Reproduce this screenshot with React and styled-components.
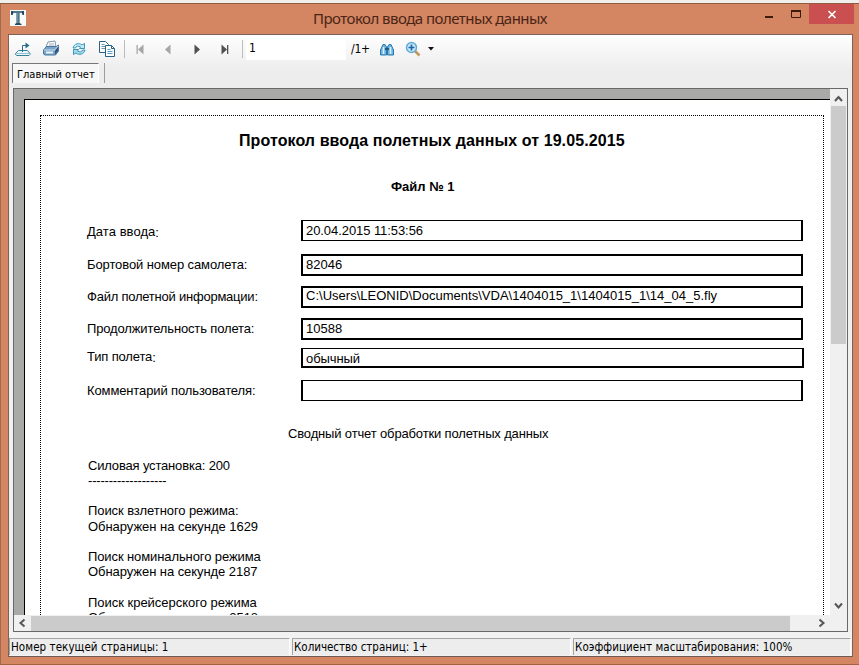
import React from 'react';
import styled, { createGlobalStyle } from 'styled-components';

const GlobalStyle = createGlobalStyle`
  * { box-sizing: border-box; }
  body { margin: 0; background: #f1efec; overflow: hidden; }
`;

const ui = '"DejaVu Sans Condensed", "DejaVu Sans", sans-serif';
const report = '"Liberation Sans", Arial, sans-serif';

const Desktop = styled.div`
  width: 859px;
  height: 665px;
  padding-top: 3px;
  background: #f1efec;
  overflow: hidden;
`;

const Window = styled.div`
  width: 859px;
  height: 662px;
  display: flex;
  flex-direction: column;
  padding: 0 5px 7px 7px;
  background: #d38661;
  border-top: 1px solid #8f5b43;
  border-left: 1px solid #a0694f;
  border-bottom: 1px solid #a8613e;
`;

const TitleBar = styled.header`
  flex: 0 0 30px;
  display: grid;
  grid-template-columns: 190px 1fr 190px;
`;

const AppIcon = styled.svg`
  display: block;
  margin: 6px 0 0 2px;
`;

const WindowTitle = styled.h1`
  margin: 0;
  padding: 3px 2px 0 0;
  text-align: center;
  font: 400 15px/22px "Noto Sans", "Open Sans", sans-serif;
  color: #4a2416;
  white-space: nowrap;
  letter-spacing: -0.53px;
`;

const WindowButtons = styled.div`
  display: flex;
  justify-content: flex-end;
  align-items: flex-start;
`;

const WindowButton = styled.button`
  width: ${(p) => (p.$close ? 45 : 27)}px;
  height: 20px;
  padding: 0;
  border: 0;
  background: ${(p) => (p.$close ? '#c94f50' : 'transparent')};
`;

const ButtonGlyph = styled.svg`
  display: block;
`;

const Client = styled.main`
  flex: 0 0 623px;
  width: 845px;
  display: flex;
  flex-direction: column;
  border: 1px solid #7c6257;
  border-bottom-color: #6d5a52;
  background: #f0f0f0;
`;

const Header = styled.div`
  flex: 0 0 53px;
  background: linear-gradient(#ffffff 0, #f8f8f8 12px, #ededed 34px, #ededed 100%);
`;

const Toolbar = styled.div`
  height: 28px;
  display: flex;
  align-items: center;
  padding-left: 5px;
`;

const ToolButton = styled.button`
  width: ${(p) => p.$w}px;
  height: 26px;
  display: flex;
  align-items: center;
  justify-content: center;
  padding: 0;
  border: 0;
  background: transparent;
`;

const ToolDivider = styled.i`
  width: 1px;
  height: 18px;
  margin: 0 ${(p) => p.$right}px 0 ${(p) => p.$left}px;
  background: #bcbcbc;
`;

const PageInput = styled.input`
  width: 100px;
  height: 22px;
  padding: 0 3px 3px;
  border: 0;
  background: #ffffff;
  color: #000;
  font: 12px/16px ${ui};
`;

const PageTotal = styled.span`
  width: 30px;
  padding-left: 5px;
  font: 12px/16px ${ui};
  letter-spacing: -0.2px;
`;

const Tabs = styled.div`
  height: 22px;
  display: flex;
  padding-left: 3px;
`;

const Tab = styled.div`
  width: 87px;
  height: 20px;
  padding: 0 0 0 4px;
  border-top: 1px solid #777;
  border-left: 1px solid #777;
  border-right: 1px solid #fff;
  background: #f7f7f7;
  font: 11px/21px ${ui};
  letter-spacing: 0;
  white-space: nowrap;
`;

const TabDivider = styled.i`
  width: 1px;
  height: 20px;
  margin-left: 5px;
  background: #9c9c9c;
`;

const Viewer = styled.section`
  flex: 0 0 544px;
  width: 835px;
  margin-left: 4px;
  display: grid;
  grid-template: 526px 16px / 816px 17px;
  border: 1px solid #686868;
  background: #f0f0f0;
`;

const Canvas = styled.div`
  padding: 10px 0 0 10px;
  overflow: hidden;
  background: #a9a9a7;
`;

const Page = styled.article`
  width: 806px;
  height: 516px;
  padding: 15px 6px 0 15px;
  border-top: 1px solid #000;
  border-left: 1px solid #000;
  background: #fff;
  color: #000;
  overflow: hidden;
`;

const Margins = styled.div`
  width: 784px;
  height: 560px;
  border: 1px dotted #000;
  font: 13px/15px ${report};
  white-space: nowrap;
`;

const Heading = styled.h2`
  margin: 16px 0 0 198px;
  font: 700 16px/18px ${report};
  letter-spacing: 0.09px;
`;

const FileTitle = styled.h3`
  margin: 29px 0 26px 350px;
  font: 700 13px/15px ${report};
`;

const Field = styled.div`
  display: grid;
  grid-template-columns: 214px ${(p) => p.$w}px;
  height: ${(p) => p.$h}px;
  margin: 0 0 ${(p) => p.$gap}px 46px;
`;

const Label = styled.span`
  padding-top: ${(p) => p.$top}px;
  letter-spacing: ${(p) => p.$track}px;
`;

const LowColon = styled.span`
  position: relative;
  top: 1px;
`;

const Value = styled.div`
  border: 2px solid #000;
  border-top-width: ${(p) => p.$bt}px;
  border-bottom-width: ${(p) => p.$bb}px;
  padding: ${(p) => p.$top}px 0 0 3px;
  letter-spacing: ${(p) => p.$track}px;
`;

const Summary = styled.p`
  margin: 25px 0 16.75px 247px;
  letter-spacing: -0.15px;
`;

const LogLine = styled.div`
  height: 15.22px;
  padding-left: 47px;
  letter-spacing: ${(p) => p.$track || 0}px;
`;

const ScrollBar = styled.div`
  display: flex;
  flex-direction: ${(p) => (p.$vertical ? 'column' : 'row')};
  align-items: ${(p) => (p.$vertical ? 'flex-start' : 'center')};
  padding-left: ${(p) => (p.$vertical ? 1 : 0)}px;
  background: #f0f0f0;
`;

const ScrollArrow = styled.svg`
  flex: none;
  display: block;
`;

const Thumb = styled.div`
  flex: none;
  width: ${(p) => p.$w}px;
  height: ${(p) => p.$h}px;
  background: #cbcbcb;
`;

const Filler = styled.div`
  flex: 1;
`;

const StatusBar = styled.footer`
  flex: 1;
  display: grid;
  grid-template-columns: 281px 279px 278px;
  column-gap: 2px;
  padding-top: 6px;
  background: #f2f2f2;
`;

const StatusPanel = styled.div`
  height: 17px;
  padding-left: 1px;
  border-top: 1px solid #a4a4a4;
  border-left: 1px solid #a4a4a4;
  border-right: 1px solid #fff;
  background: #ededed;
  color: #000;
  font: 11.5px/17px ${ui};
  letter-spacing: ${(p) => p.$track}px;
  white-space: nowrap;
`;

const fields = [
  { label: 'Дата ввода', low: true, lt: 4, lk: 0.05, value: '20.04.2015 11:53:56', vt: 2, vk: -0.07, h: 21, gap: 13, bt: 1, bb: 1 },
  { label: 'Бортовой номер самолета', lt: 3, lk: -0.1, value: '82046', vt: 1, vk: 0, h: 22, gap: 10, bt: 2, bb: 2 },
  { label: 'Файл полетной информации', lt: 3, lk: -0.23, value: 'C:\\Users\\LEONID\\Documents\\VDA\\1404015_1\\1404015_1\\14_04_5.fly', vt: 0, vk: 0.01, h: 22, gap: 10, bt: 2, bb: 2 },
  { label: 'Продолжительность полета', lt: 3, lk: -0.14, value: '10588', vt: 1, vk: 0, h: 22, gap: 8, bt: 2, bb: 2 },
  { label: 'Тип полета', low: true, lt: 1, lk: -0.15, value: 'обычный', vt: 2, vk: -0.1, h: 20, gap: 12, w: 503, bt: 1, bb: 2 },
  { label: 'Комментарий пользователя', lt: 3, lk: -0.12, value: '', vt: 0, vk: 0, h: 21, gap: 0, bt: 1, bb: 1 },
];

const log = [
  ['Силовая установка: 200', -0.17],
  ['-------------------', -0.2],
  ['', 0],
  ['Поиск взлетного режима:', -0.08],
  ['Обнаружен на секунде 1629', -0.04],
  ['', 0],
  ['Поиск номинального режима', -0.1],
  ['Обнаружен на секунде 2187', -0.06],
  ['', 0],
  ['Поиск крейсерского режима', -0.02],
  ['Обнаружен на секунде 2518', -0.04],
];

const ExportIcon = () => (
  <svg width="18" height="18" viewBox="0 0 18 18" fill="none" stroke="#337f9b">
    <path d="M4.5 10.5h9l2.5 3v1l-1 1H3l-1.500-1v-1z" fill="#eef8fb" />
    <path d="M2.500 13.500h13" stroke="#8cc0d0" />
    <path d="M8.500 12V5.500h5" stroke="#286f86" />
    <path d="M11.500 2.500l4 3-4 3z" fill="#286f86" stroke="none" />
  </svg>
);

const PrinterIcon = () => (
  <svg width="18" height="18" viewBox="0 0 18 18">
    <path d="M6 2l7-1 1 6H4z" fill="#fff" stroke="#7c95ad" />
    <path d="M7 4h5M6.500 6h6" stroke="#a0abba" />
    <path d="M1.500 10l3-3.500h10l2-1.500v6l-3 4H3l-1.500-1z" fill="#7ba4c9" stroke="#47779f" />
    <path d="M2 10h11l3-4" fill="none" stroke="#c6dff1" />
    <path d="M13 10.500v4l3-3.500V7z" fill="#31517b" />
    <path d="M4 12.500h7" stroke="#e8f5fc" strokeWidth="2" />
  </svg>
);

const RefreshIcon = () => (
  <svg width="16" height="16" viewBox="0 0 16 16" stroke="#318bb2" strokeWidth="0.900">
    <path d="M2 7C3 2.500 8 1.500 11 4l2.500-1.500v5H8.500L9.500 6C7.500 4.500 5 5 4.500 7z" fill="#c2ecf7" />
    <path d="M14 9c-1 4.500-6 5.500-9 3l-2.500 1.500v-5h5L6.500 10c2 1.500 4.500 1 5-1z" fill="#a2dcee" />
  </svg>
);

const CopyIcon = () => (
  <svg width="18" height="18" viewBox="0 0 18 18" stroke="#286182" fill="#fff">
    <path d="M1.500 1.500h6l3 3v8h-9z" />
    <path d="M3.500 4.500h3M3.500 6.500h5M3.500 8.500h4" stroke="#6397b5" />
    <path d="M7.500 5.500h6l3 3v8h-9z" />
    <path d="M13.500 5.500v3h3" fill="none" />
    <path d="M9.500 9.500h3M9.500 11.500h5M9.500 13.500h5" stroke="#559cc1" />
  </svg>
);

const NavIcon = ({ back, bar, color }) => (
  <svg width="9" height="11" viewBox="0 0 9 11" fill={color}>
    {back ? <path d="M7.500 0.500v10L2 5.500z" /> : <path d="M1.500 0.500v10L7 5.500z" />}
    {bar && <rect x={back ? 0.5 : 7} y="1" width="1.300" height="9" />}
  </svg>
);

const BinocularsIcon = () => (
  <svg width="16" height="15" viewBox="0 0 16 15" stroke="#2877ad">
    <path d="M1.500 13V8L4 2.500h2L7.500 5v8z" fill="#70b4df" />
    <path d="M14.500 13V8L12 2.500h-2L8.500 5v8z" fill="#70b4df" />
    <path d="M4.500 5v7M11.500 5v7" stroke="#d9f2ff" strokeWidth="1.500" />
    <path d="M6 7h4" stroke="#235883" strokeWidth="2" />
  </svg>
);

const ZoomIcon = () => (
  <svg width="16" height="16" viewBox="0 0 16 16">
    <path d="M9.500 9.500l5 5" stroke="#c29757" strokeWidth="2.500" />
    <circle cx="6.500" cy="6.500" r="5" fill="#c9eafa" stroke="#62a9d4" strokeWidth="1.500" />
    <path d="M6.500 3.500v6M3.500 6.500h6" stroke="#1f66a8" strokeWidth="1.700" />
  </svg>
);

const Arrow = ({ d, w = 16, h = 16 }) => (
  <ScrollArrow width={w} height={h} viewBox="0 0 16 16">
    <path d={d} fill="none" stroke="#555" strokeWidth="2" />
  </ScrollArrow>
);

export default function App() {
  return (
    <Desktop>
      <GlobalStyle />
      <Window>
        <TitleBar>
          <AppIcon width="16" height="16" viewBox="0 0 16 16">
            <rect width="16" height="16" fill="#f5fafa" />
            <path d="M1 1h13v4h-1.500l-.7-2H9.500v10l2 1v1H5v-1l1.500-1V3H3.500L2.500 5H1z" fill="#284b5b" />
            <path d="M7.200 3h1.300v10H7.200zM3 1.500h9v1H3z" fill="#75a6b8" />
          </AppIcon>
          <WindowTitle>Протокол ввода полетных данных</WindowTitle>
          <WindowButtons>
            <WindowButton aria-label="Свернуть">
              <ButtonGlyph width="27" height="20"><path d="M10 13h8" stroke="#3c1a0d" strokeWidth="2" /></ButtonGlyph>
            </WindowButton>
            <WindowButton aria-label="Развернуть">
              <ButtonGlyph width="27" height="20">
                <path d="M9.500 6.500h9v7h-9z" fill="none" stroke="#3c1a0d" />
                <path d="M9 7h10" stroke="#3c1a0d" strokeWidth="2" />
              </ButtonGlyph>
            </WindowButton>
            <WindowButton $close aria-label="Закрыть">
              <ButtonGlyph width="45" height="20"><path d="M19.500 7l7 7M26.500 7l-7 7" stroke="#fff" strokeWidth="1.700" /></ButtonGlyph>
            </WindowButton>
          </WindowButtons>
        </TitleBar>

        <Client>
          <Header>
            <Toolbar>
              <ToolButton $w={18}><ExportIcon /></ToolButton>
              <ToolButton $w={38}><PrinterIcon /></ToolButton>
              <ToolButton $w={18}><RefreshIcon /></ToolButton>
              <ToolButton $w={38}><CopyIcon /></ToolButton>
              <ToolDivider $left={-2} $right={5} />
              <ToolButton $w={20}><NavIcon back bar color="#a6a6a6" /></ToolButton>
              <ToolButton $w={35}><NavIcon back color="#a6a6a6" /></ToolButton>
              <ToolButton $w={24}><NavIcon color="#505050" /></ToolButton>
              <ToolButton $w={31}><NavIcon bar color="#505050" /></ToolButton>
              <ToolDivider $left={2} $right={3} />
              <PageInput defaultValue="1" />
              <PageTotal>/1+</PageTotal>
              <ToolButton $w={22}><BinocularsIcon /></ToolButton>
              <ToolButton $w={30}><ZoomIcon /></ToolButton>
              <ToolButton $w={6}>
                <svg width="6" height="4"><path d="M0 0h6L3 3.500z" fill="#111" /></svg>
              </ToolButton>
            </Toolbar>
            <Tabs>
              <Tab>Главный отчет</Tab>
              <TabDivider />
            </Tabs>
          </Header>

          <Viewer>
            <Canvas>
              <Page>
                <Margins>
                  <Heading>Протокол ввода полетных данных от 19.05.2015</Heading>
                  <FileTitle>Файл № 1</FileTitle>
                  {fields.map((f) => (
                    <Field key={f.label} $h={f.h} $gap={f.gap} $w={f.w || 502}>
                      <Label $top={f.lt} $track={f.lk}>
                        {f.label}
                        {f.low ? <LowColon>:</LowColon> : ':'}
                      </Label>
                      <Value $top={f.vt} $track={f.vk} $bt={f.bt} $bb={f.bb}>{f.value}</Value>
                    </Field>
                  ))}
                  <Summary>Сводный отчет обработки полетных данных</Summary>
                  {log.map(([text, track], i) => (
                    <LogLine key={i} $track={track}>{text}</LogLine>
                  ))}
                </Margins>
              </Page>
            </Canvas>
            <ScrollBar $vertical>
              <Arrow d="M4 11.500l3.500-4 3.500 4" h={17} />
              <Thumb $w={15} $h={238} />
              <Filler />
              <Arrow d="M4 5l3.500 4L11 5" h={17} />
            </ScrollBar>
            <ScrollBar>
              <Arrow d="M10 4.500L6 8l4 3.500" w={17} />
              <Thumb $w={759} $h={15} />
              <Filler />
              <Arrow d="M6 4.500L10 8l-4 3.500" w={17} />
            </ScrollBar>
          </Viewer>

          <StatusBar>
            <StatusPanel $track={0.07}>Номер текущей страницы: 1</StatusPanel>
            <StatusPanel $track={-0.02}>Количество страниц: 1+</StatusPanel>
            <StatusPanel $track={0.04}>Коэффициент масштабирования: 100%</StatusPanel>
          </StatusBar>
        </Client>
      </Window>
    </Desktop>
  );
}
